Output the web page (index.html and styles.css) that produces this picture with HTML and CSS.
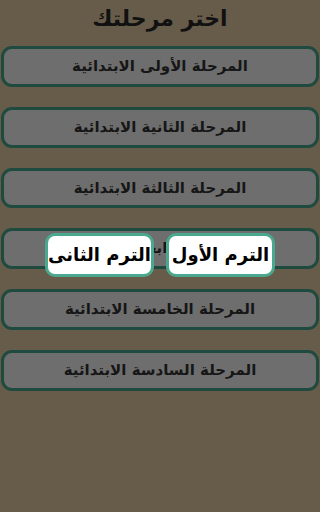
FILE: index.html
```html
<!DOCTYPE html>
<html lang="ar" dir="rtl">
<head>
<meta charset="utf-8">
<link rel="stylesheet" href="styles.css">
</head>
<body>
<main class="screen">
  <h1 class="title">اختر مرحلتك</h1>
  <div class="stages">
    <div class="stage">المرحلة الأولى الابتدائية</div>
    <div class="stage">المرحلة الثانية الابتدائية</div>
    <div class="stage">المرحلة الثالثة الابتدائية</div>
    <div class="stage">المرحلة الرابعة الابتدائية</div>
    <div class="stage">المرحلة الخامسة الابتدائية</div>
    <div class="stage">المرحلة السادسة الابتدائية</div>
  </div>
  <div class="terms">
    <div class="term">الترم الأول</div>
    <div class="term">الترم الثانى</div>
  </div>
</main>
</body>
</html>
```

FILE: styles.css
```css
html, body {
  margin: 0;
  padding: 0;
  background: #675c49;
}
.screen {
  position: relative;
  height: 512px;
  font-family: "DejaVu Sans", "Noto Sans", sans-serif;
  direction: rtl;
}
.title {
  margin: 0;
  height: 46px;
  line-height: 38px;
  text-align: center;
  font-size: 22px;
  font-weight: bold;
  color: #111;
}
.stages {
  display: flex;
  flex-direction: column;
  gap: 20px;
  padding: 0 1px;
}
.stage {
  height: 34.8px;
  line-height: 34.8px;
  border: 3px solid #1e4a3f;
  border-radius: 11px;
  background: #6e6e6e;
  color: #161616;
  text-align: center;
  font-size: 15px;
  font-weight: bold;
  white-space: nowrap;
}
.terms {
  position: absolute;
  top: 233px;
  left: 0;
  right: 0;
  display: flex;
  justify-content: center;
  gap: 12px;
}
.term {
  box-sizing: border-box;
  width: 109px;
  height: 44px;
  line-height: 38px;
  border: 3px solid #4aa88e;
  border-radius: 10px;
  background: #fff;
  color: #000;
  text-align: center;
  font-size: 18px;
  font-weight: bold;
  white-space: nowrap;
}
```
